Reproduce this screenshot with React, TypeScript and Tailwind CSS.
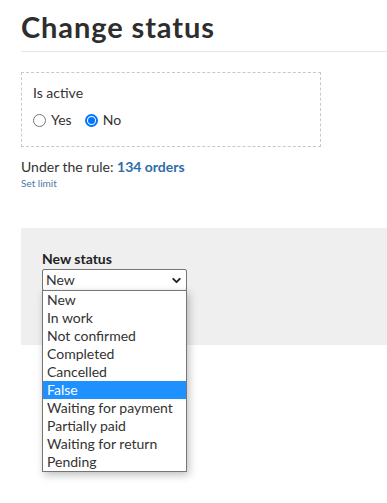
import { ChevronDown } from "lucide-react";

const statuses = [
  "New",
  "In work",
  "Not confirmed",
  "Completed",
  "Cancelled",
  "False",
  "Waiting for payment",
  "Partially paid",
  "Waiting for return",
  "Pending",
];

export default function App() {
  return (
    <div
      className="min-h-screen bg-white pl-[21px] pt-[9px] text-[#333]"
      style={{ fontFamily: "Lato, 'Open Sans', sans-serif" }}
    >
      {/* Header */}
      <h1 className="border-b border-[#e6e6e6] pb-[6px] text-[29px] font-bold leading-[36px] tracking-[0.9px] text-[#2e2e2e]">
        Change status
      </h1>

      {/* Active toggle */}
      <div className="mt-[20px] w-[300px] border border-dashed border-[#c8c8c8] px-[11px] pb-[17px] pt-[11px]">
        <div className="text-[14px] leading-[18px]">Is active</div>
        <div className="mt-[9px] flex items-center text-[14px] leading-[18px]">
          <label className="flex items-center">
            <span className="box-border h-[13px] w-[13px] rounded-full border border-[#767676] bg-white" />
            <span className="ml-[5px]">Yes</span>
          </label>
          <label className="ml-[13px] flex items-center">
            <span className="box-border flex h-[13px] w-[13px] items-center justify-center rounded-full border-2 border-[#0075ff] bg-white">
              <span className="h-[7px] w-[7px] rounded-full bg-[#0075ff]" />
            </span>
            <span className="ml-[5px]">No</span>
          </label>
        </div>
      </div>

      <div className="mt-[11px] text-[14px] leading-[18px]">
        Under the rule: <span className="font-bold text-[#2d6ca8]">134 orders</span>
      </div>
      <div className="text-[10px] leading-[14px] text-[#4a78a8]">Set limit</div>

      {/* Status panel */}
      <div className="mt-[38px] h-[117px] bg-[#efefef] pl-[21px] pt-[22px]">
        <div className="text-[14px] font-bold leading-[18px] text-[#222]">New status</div>
        <div className="relative mt-[1px] w-[145px]">
          <div className="flex h-[22px] items-center justify-between rounded-[2px] border border-[#767676] bg-white pl-[3px] pr-[3px] text-[14px] leading-[18px]">
            <span>New</span>
            <ChevronDown size={13} strokeWidth={3.5} className="text-[#222]" />
          </div>
          <ul className="absolute left-0 top-[21px] w-[145px] border border-[#767676] bg-white text-[14px] leading-[18px] shadow-[2px_3px_8px_rgba(0,0,0,0.25)]">
            {statuses.map((s) => (
              <li
                key={s}
                className={
                  s === "False"
                    ? "h-[18px] bg-[#1e90ff] pl-[4px] text-white"
                    : "h-[18px] pl-[4px]"
                }
              >
                {s}
              </li>
            ))}
          </ul>
        </div>
      </div>
    </div>
  );
}
